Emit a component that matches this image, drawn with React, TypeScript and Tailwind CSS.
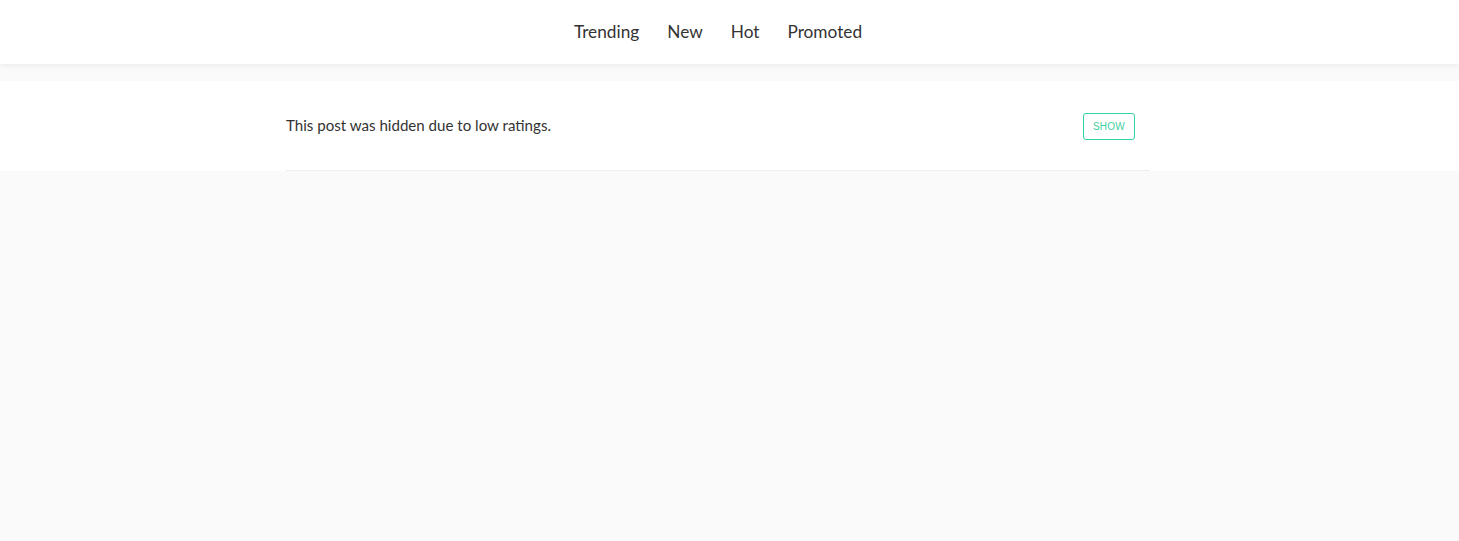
import React from 'react';

const tabs = ['Trending', 'New', 'Hot', 'Promoted'];

const App: React.FC = () => {
  return (
    <div
      className="min-h-screen bg-[#fafafa] text-[#333]"
      style={{ fontFamily: '"Lato", "Open Sans", sans-serif' }}
    >
      {/* Header */}
      <header className="h-16 bg-white shadow-[0_2px_6px_rgba(0,0,0,0.06)] pr-[23px] flex items-center justify-center relative z-10">
        <nav className="flex items-center gap-7 text-[17.25px] text-[#333]">
          {tabs.map((t) => (
            <a key={t} className="cursor-pointer">
              {t}
            </a>
          ))}
        </nav>
      </header>

      {/* Hidden post */}
      <div className="mt-[17px] bg-white pr-[23px] flex justify-center">
        <div className="w-[864px] h-[90px] border-b border-[#eee] flex items-center justify-between pr-[15px]">
          <p className="text-[15.1px] text-[#333]">This post was hidden due to low ratings.</p>
          <button
            className="mt-[2px] w-[52px] h-[27px] rounded-[3px] border border-[#2fd3a3] text-[#3fcf9f] text-[10px] tracking-wide flex items-center justify-center"
            style={{ fontFamily: '"Liberation Sans", Arial, sans-serif' }}
          >
            SHOW
          </button>
        </div>
      </div>
    </div>
  );
};

export default App;
